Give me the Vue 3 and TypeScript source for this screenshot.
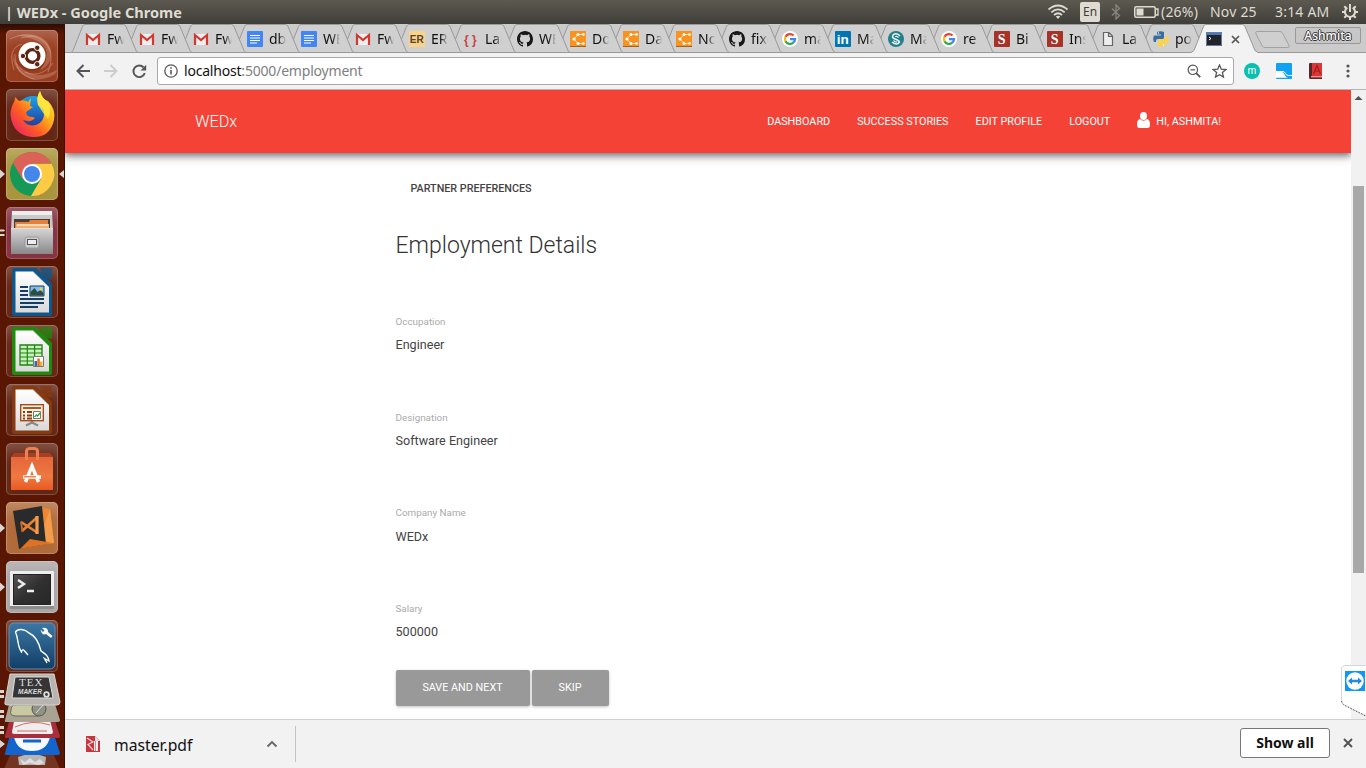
<script setup lang="ts">
interface Tab {
  icon: string
  label: string
  width: number
}
interface Field {
  label: string
  value: string
}

const tabData: [string, string][] = [
  ['gmail', 'Fwd'], ['gmail', 'Fwd'], ['gmail', 'Fwd'], ['docs', 'dbm'], ['docs', 'WED'], ['gmail', 'Fwd'],
  ['er', 'ERD'], ['braces', 'Lar'], ['github', 'WE'], ['creately', 'Doc'], ['creately', 'Dat'], ['creately', 'Nor'],
  ['github', 'fixe'], ['google', 'ma'], ['linkedin', 'Ma'], ['scribd', 'Ma'], ['google', 're'], ['sblock', 'Bi'],
  ['sblock', 'Ins'], ['page', 'La'], ['python', 'pos'],
]
const tabs: Tab[] = tabData.map(([icon, label], i) => ({ icon, label, width: i < 8 ? 54 : 53 }))

const launcher = [
  { name: 'ubuntu', mark: '' },
  { name: 'firefox', mark: '' },
  { name: 'chrome', mark: 'arrow' },
  { name: 'files', mark: 'pips' },
  { name: 'writer', mark: '' },
  { name: 'calc', mark: '' },
  { name: 'impress', mark: '' },
  { name: 'software', mark: '' },
  { name: 'code', mark: 'arrow' },
  { name: 'terminal', mark: 'arrow' },
  { name: 'mysql', mark: '' },
]

const links = ['Dashboard', 'Success Stories', 'Edit Profile', 'Logout']
const fields: Field[] = [
  { label: 'Occupation', value: 'Engineer' },
  { label: 'Designation', value: 'Software Engineer' },
  { label: 'Company Name', value: 'WEDx' },
  { label: 'Salary', value: '500000' },
]
</script>

<template>
  <div class="desktop">
    <header class="panel">
      <span class="panel-title">| WEDx - Google Chrome</span>
      <svg class="wifi" width="22" height="16" viewBox="0 0 22 16" fill="none" stroke="#dfdbd2" stroke-width="1.7">
        <path d="M1.5 5.5Q11-2.5 20.5 5.500M4.300 8.300Q11 2.500 17.700 8.300M7 11Q11 7.500 15 11" />
        <path d="M8.800 12.600Q11 10.800 13.200 12.600L11 15z" fill="#dfdbd2" stroke="none" />
      </svg>
      <span class="lang">En</span>
      <svg class="bt" width="10" height="16" viewBox="0 0 10 16" fill="none" stroke="#89867f" stroke-width="1.3">
        <path d="M1 4.500L8.500 11.500L5 15V1L8.500 4.500L1 11.500" />
      </svg>
      <svg class="battery" width="25" height="12" viewBox="0 0 25 12">
        <rect x=".75" y=".75" width="20.500" height="10.500" rx="1.500" fill="none" stroke="#dfdbd2" stroke-width="1.500" />
        <rect x="2.500" y="2.500" width="7" height="7" fill="#dfdbd2" />
        <path d="M22 3h2v6h-2" fill="none" stroke="#dfdbd2" stroke-width="1.300" />
      </svg>
      <span class="pct">(26%)</span>
      <span class="date">Nov 25</span>
      <span class="time">3:14 AM</span>
      <svg class="gear" width="16" height="16" viewBox="0 0 16 16" fill="none" stroke="#dfdbd2">
        <path d="M5.300 3.700A5 5 0 1 0 10.700 3.700" stroke-width="2" />
        <path d="M8 0V8" stroke-width="2" />
        <path d="M0 8h3M13 8h3M8 13v3M2.300 13.700l2-2M13.700 13.700l-2-2M2.300 2.300l2 2M13.700 2.300l-2 2" stroke-width="2" />
      </svg>
    </header>

    <div class="body">
      <aside class="launcher">
        <svg width="0" height="0" class="defs">
          <defs>
            <linearGradient id="paper" x1="0" y1="0" x2="0" y2="1">
              <stop offset="0" stop-color="#fff" /><stop offset="1" stop-color="#d9d9d9" />
            </linearGradient>
            <linearGradient id="metal" x1="0" y1="0" x2="0" y2="1">
              <stop offset="0" stop-color="#d6d6d6" /><stop offset="1" stop-color="#888" />
            </linearGradient>
            <linearGradient id="fox" x1="1" y1="0" x2="0" y2="1">
              <stop offset="0" stop-color="#fff044" /><stop offset=".38" stop-color="#ffae1c" />
              <stop offset=".62" stop-color="#ff5b24" /><stop offset="1" stop-color="#e3127a" />
            </linearGradient>
            <linearGradient id="globe" x1="0" y1="0" x2="0" y2="1">
              <stop offset="0" stop-color="#18a2ee" /><stop offset="1" stop-color="#25318f" />
            </linearGradient>
            <linearGradient id="bag" x1="0" y1="0" x2="0" y2="1">
              <stop offset="0" stop-color="#e4673a" /><stop offset=".6" stop-color="#f07840" /><stop offset="1" stop-color="#e65a22" />
            </linearGradient>
            <linearGradient id="screen" x1="0" y1="0" x2="1" y2="1">
              <stop offset="0" stop-color="#555" /><stop offset=".5" stop-color="#303030" /><stop offset="1" stop-color="#272727" />
            </linearGradient>
            <linearGradient id="sea" x1="0" y1="0" x2="0" y2="1">
              <stop offset="0" stop-color="#3b77a5" /><stop offset="1" stop-color="#123f67" />
            </linearGradient>
          </defs>
        </svg>
        <div v-for="app in launcher" :key="app.name" class="slot">
          <svg class="mark" width="6" height="12" viewBox="0 0 6 12" fill="#dcd6d3">
            <path v-if="app.mark === 'arrow'" d="M0 1.500L5 6L0 10.500z" />
            <path v-if="app.mark === 'pips'" d="M0 2.500h4l1 1-1 1H0zM0 7h4l1 1-1 1H0z" />
          </svg>
          <div class="tile" :class="app.name">
            <svg width="52" height="52" viewBox="0 0 52 52">
              <g v-if="app.name === 'ubuntu'">
                <g fill="none" stroke="#e8b09b" stroke-opacity=".4" stroke-width="1.200">
                  <path d="M4 9Q24-1 40 13Q49 24 42 42M15 8Q38 1 45 24M8 40Q1 18 16 14M28 49Q9 45 9 24M47 33Q35 49 19 42" />
                </g>
                <path d="M11 6Q38 0 45 20Q46 36 34 40Q49 20 31 11Q20 6 11 6zM7 23Q5 42 28 50Q50 48 51 40Q31 50 18 40Q7 33 7 23z" fill="#eac2b0" fill-opacity=".28" />
                <circle cx="26" cy="27" r="14" fill="#7b2710" opacity=".5" />
                <circle cx="26" cy="25.500" r="13.500" fill="#fff" />
                <circle cx="26.500" cy="26" r="6.400" fill="none" stroke="#5b2413" stroke-width="3.400" />
                <g fill="#5b2413" stroke="#fff" stroke-width=".9"><circle cx="17" cy="26" r="2.700" /><circle cx="31.200" cy="17.800" r="2.700" /><circle cx="31.200" cy="34.200" r="2.700" /></g>
              </g>
              <g v-else-if="app.name === 'firefox'">
                <circle cx="27" cy="24" r="17" fill="url(#globe)" />
                <path d="M4.500 25C5 18 7 15 8.500 12L9 8L13 12Q18 10 22 13L25 9L24 17L27 18L20 23Q20 28 27 28L29 29Q25 34 17 31Q21 38 30 36Q39 33 38 22Q37 19 32 16Q30 8 34 2Q36 10 42 12Q50 20 48 31Q44 49 26 48Q6 46 4.500 25z" fill="url(#fox)" />
                <path d="M34 2Q36 10 43 14Q46 21 42 30Q36 23 32 16Q30 8 34 2z" fill="#fff044" opacity=".75" />
              </g>
              <g v-else-if="app.name === 'chrome'">
                <circle cx="26" cy="26" r="22" fill="#159957" />
                <path d="M26 15.500H45.500A22 22 0 0 1 25 48L35 31z" fill="#ffcb45" />
                <path d="M7 15A22 22 0 0 1 45.500 15.500H26L16.500 31z" fill="#dc6157" />
                <circle cx="26" cy="26" r="10" fill="#fff" /><circle cx="26" cy="26" r="8" fill="#4587e9" />
              </g>
              <g v-else-if="app.name === 'files'">
                <path d="M6 4H46L47 22H5z" fill="#c9c9c9" /><path d="M6 4H46V8H6z" fill="#eee" />
                <path d="M8 12H44V24H8z" fill="#4a3c37" />
                <path d="M9 15H23L24 13H42V23H9z" fill="#e67f38" /><path d="M10 17H43V23H10z" fill="#f5b06c" /><path d="M11 18H42" stroke="#fff" />
                <path d="M5 21H47V47H5z" fill="url(#metal)" /><path d="M5 21.500H47" stroke="#ddd" />
                <rect x="19" y="30" width="14" height="11" rx="2" fill="#ccc" stroke="#999" /><rect x="21.500" y="32.500" width="9" height="5" fill="#eee" stroke="#555" />
              </g>
              <g v-else-if="['writer', 'calc', 'impress'].includes(app.name)">
                <g :class="app.name + '-edge'"><path d="M8 2H30L46 18V48Q46 50 44 50H8Q6 50 6 48V4Q6 2 8 2z" /><path d="M34 2H46V14Q36 13 34 2z" opacity=".75" /></g>
                <path d="M9.500 5.500H27L43 21V46.500H9.500z" fill="url(#paper)" /><path d="M27 5.500L43 21" stroke="#999" stroke-width=".6" />
                <g v-if="app.name === 'writer'">
                  <path d="M14 21h8M14 25h8M14 29h8M14 33h24M14 37h24M14 41h18" stroke="#123f68" stroke-width="2" />
                  <path d="M24 20h14v10H24z" fill="#79c2ef" stroke="#173e5c" /><path d="M24.500 29.500V26l4-4 3 4 3-2 3 3v2.500z" fill="#2f4c40" /><circle cx="35" cy="23" r="1.500" fill="#f8cc3a" />
                </g>
                <g v-else-if="app.name === 'calc'">
                  <path d="M14 20h22v20H14z" fill="#c5f4b9" stroke="#258015" stroke-width="1.300" /><path d="M14 23.800h22M14 28h22M14 32h22M14 36h22M21.300 20v20M28.600 20v20" stroke="#258015" stroke-width="1.200" />
                  <path d="M27.500 31.500h10v10h-10z" fill="#fff" stroke="#777" /><path d="M28.500 36h2.500v5h-2.500z" fill="#276bb0" /><path d="M31.300 33.500h2.500V41h-2.500z" fill="#e56c23" /><path d="M34 36.500h2.500V41H34z" fill="#eeb332" />
                </g>
                <g v-else>
                  <path d="M26 37v2M20 41.500l6-3 6 3" fill="none" stroke="#888" stroke-width="2.400" /><rect x="14.700" y="20.700" width="22.600" height="16" fill="#fff3e5" stroke="#a84a17" stroke-width="1.400" />
                  <path d="M17 24h18" stroke="#b15820" stroke-width="2" /><path d="M17 28h2M17 31.500h2M17 34.500h2M21 28h5M21 31.500h5M21 34.500h5" stroke="#883d12" stroke-width="2" />
                  <path d="M27.500 27.500h7v7h-7z" fill="#fff" stroke="#777" /><path d="M28.500 33l2-2 1 1 2.500-3" fill="none" stroke="#2d9c42" stroke-width="1.300" />
                </g>
              </g>
              <g v-else-if="app.name === 'software'">
                <path d="M8 10H44L47 14H5z" fill="#aa3e21" /><path d="M5 14H47V47H5z" fill="url(#bag)" />
                <path d="M20.500 17V8Q21 5.500 24 5.500H28Q31 5.500 31.500 8V17" fill="none" stroke="#ef8055" stroke-width="3" />
                <path d="M19.500 39L26 23L32.500 39M17 34H35" fill="none" stroke="#fff" stroke-width="3.400" /><path d="M18 33.800h12" stroke="#f2622a" stroke-width="1.200" />
              </g>
              <g v-else-if="app.name === 'code'">
                <path d="M35 5L44 7L48 41L31 43z" fill="#ed8733" /><path d="M44 7L48 41L31 43L35 33z" fill="#f39c49" />
                <path d="M7 9L36 4L40 42L13 47z" fill="#292a2c" /><path d="M24 37L47 41L14 47z" fill="#dd7224" />
                <path d="M31.500 15L16 29M15 20L32 31" fill="none" stroke="#e98032" stroke-width="2.600" /><path d="M31 14V32" stroke="#f39c49" stroke-width="3.200" /><path d="M15 19.500L16.500 30" stroke="#c96a25" stroke-width="1.800" />
              </g>
              <g v-else-if="app.name === 'terminal'">
                <rect x="4" y="10" width="44" height="37" rx="1" fill="#eee" /><path d="M4 45h44v3H4z" fill="#8c8c8c" />
                <rect x="7.500" y="13.500" width="37" height="30" fill="url(#screen)" stroke="#222" /><path d="M12 19L18 23L12 27M21 30H28" fill="none" stroke="#eee" stroke-width="2.400" />
              </g>
              <g v-else>
                <rect x="3" y="3" width="46" height="46" rx="5" fill="url(#sea)" stroke="#6391b5" />
                <path d="M22 35C18 31 17 27 15.500 32C11 26 13 20 9.500 12C12 8 19 9 23 13C30 16 33 23 35 31C39 34 42 35 43 41L38.500 38.500L41 43" fill="none" stroke="#fff" stroke-width="1.400" />
                <path d="M36 8L38.500 10.500L37 12L34.500 9.500Q36 16 40 14L45 18L46.500 16L42 12Q42 7 36 8z" fill="#fff" />
              </g>
            </svg>
          </div>
          <svg v-if="app.name === 'chrome'" width="7" height="12" viewBox="0 0 7 12"><path d="M6 2L1 6L6 10z" fill="#dcd6d3" /></svg>
        </div>
        <svg class="folded" width="65" height="96" viewBox="0 0 65 96">
          <g>
            <path d="M10 82H54L60 96H4z" fill="#743422" /><path d="M18 84Q32 78 46 84L45 92H19z" fill="#b7b5b1" /><path d="M20 86l5 3 5-4 5 4 5-3 4 4-6 2-8-2-7 2z" fill="#ddd" />
            <path d="M10 62H54L60 80Q60 82 57 82H7Q4 82 5 80z" fill="#1464cd" /><path d="M14 64H50Q47 78 32 78T14 64z" fill="#f4f8ff" /><path d="M23 68h18" stroke="#1464cd" stroke-width="3" />
            <path d="M10 45H54L60 63Q60 65 57 65H7Q4 65 5 63z" fill="#a82e3d" /><path d="M15 43H49L53 59Q53 61 51 61H14Q12 61 12 59z" fill="#eee" /><path d="M15 54Q32 46 50 52M17 58h30" fill="none" stroke="#d74048" stroke-width=".8" />
            <path d="M10 28H54L60 47Q60 49 57 49H7Q4 49 5 47z" fill="#aaa394" /><path d="M11 37Q11 32 16 32H38V43H16Q9 43 11 37z" fill="#c9c9a1" stroke="#696852" /><circle cx="39" cy="36" r="7" fill="#909285" stroke="#555" /><path d="M36 40l7-8" stroke="#ddd" />
            <path d="M10 1H54L60 29Q60 32 57 32H7Q4 32 5 29z" fill="#b8b5b1" stroke="#d6d2cf" /><path d="M15 4H49L53 25H12z" fill="#353535" stroke="#ddd" />
          </g>
          <text x="19" y="12.500" class="tex">TEX</text><text x="18" y="21" class="maker">MAKER</text>
          <circle cx="46.500" cy="21.500" r="2.300" fill="none" stroke="#ddd" stroke-width="1.800" />
          <path d="M0 17h4v3H0zM0 22h4v3H0zM0 37h4v3H0zM0 42h4v3H0zM0 53h4v3H0zM0 58h4v3H0zM0 67l5 4-5 4z" fill="#dcd6d3" />
        </svg>
      </aside>

      <section class="browser">
        <div class="tabstrip">
          <div v-for="(tab, i) in tabs" :key="i" class="tab" :style="{ width: tab.width + 'px', zIndex: 30 - i }">
            <svg class="shape" width="70" height="29" viewBox="0 0 70 29">
              <path d="M.5 28.500L2 26.500L11.500 2.500Q12.300 .5 14 .5H52.500Q54 .5 55 2.500L65 26.500L67 28.500z" fill="#d0d0d0" stroke="#999" />
            </svg>
            <svg class="fav" width="16" height="16" viewBox="0 0 16 16">
              <g v-if="tab.icon === 'gmail'"><path d="M1 3H15V14H1z" fill="#eee" /><path d="M2 14V4L8 9L14 4V14" fill="none" stroke="#d3382e" stroke-width="2.200" /></g>
              <g v-else-if="tab.icon === 'docs'"><rect width="16" height="16" rx="1" fill="#4285f4" /><path d="M3 4.500h10M3 7h10M3 9.500h10M3 12h7" stroke="#fff" stroke-width="1.100" /></g>
              <g v-else-if="tab.icon === 'er'"><rect width="16" height="16" fill="#f7d486" /><text x=".8" y="12" class="ico er">ER</text></g>
              <g v-else-if="tab.icon === 'braces'"><text x="1" y="12.500" class="ico brace">{ }</text></g>
              <path v-else-if="tab.icon === 'github'" d="M8 0C3.580 0 0 3.580 0 8c0 3.540 2.290 6.530 5.470 7.590.4.070.550-.170.550-.380V13.720c-2.010.370-2.530-.490-2.690-.940-.090-.230-.480-.940-.820-1.130-.280-.150-.680-.520-.010-.530.630-.010 1.080.580 1.230.820.720 1.210 1.870.870 2.330.660.070-.520.280-.870.510-1.070-1.780-.200-3.640-.890-3.640-3.950 0-.870.310-1.590.820-2.150-.080-.200-.360-1.020.080-2.120 0 0 .670-.210 2.200.820a7.600 7.600 0 0 1 4 0c1.530-1.040 2.200-.820 2.200-.820.440 1.100.160 1.920.080 2.120.510.560.820 1.270.820 2.150 0 3.070-1.870 3.750-3.650 3.950.290.250.540.730.540 1.480v2.200c0 .210.150.460.550.380A8 8 0 0 0 16 8c0-4.420-3.580-8-8-8z" fill="#191717" />
              <g v-else-if="tab.icon === 'creately'"><rect width="16" height="16" fill="#f7931e" /><path d="M0 15.500h16" stroke="#9f6425" /><path d="M13 3.500H8L4 8l4 4.500h5" fill="none" stroke="#fff" stroke-width=".7" /><g fill="#fff"><circle cx="13.500" cy="3.500" r="1.300" /><circle cx="8" cy="3.500" r="1.500" /><circle cx="4" cy="8" r="1.600" /><circle cx="8" cy="12.500" r="1.500" /><circle cx="13.500" cy="12.500" r="1.300" /></g></g>
              <g v-else-if="tab.icon === 'google'"><circle cx="8" cy="8" r="8" fill="#fff" /><g fill="none" stroke-width="2.300"><path d="M11.500 4.500A5 5 0 0 0 3.500 5.800" stroke="#ea4335" /><path d="M3.500 5.800A5 5 0 0 0 3.500 10.200" stroke="#fbbc05" /><path d="M3.500 10.200A5 5 0 0 0 11.200 11.700" stroke="#34a853" /><path d="M11.200 11.700A5 5 0 0 0 13 8.200H8" stroke="#4285f4" /></g></g>
              <g v-else-if="tab.icon === 'linkedin'"><rect width="16" height="16" rx="1" fill="#0077b5" /><text x="1.800" y="13" class="ico in">in</text></g>
              <g v-else-if="tab.icon === 'scribd'"><circle cx="8" cy="8" r="8" fill="#247f8b" /><path d="M12 5Q9 1.500 5.500 3.500Q3 6.500 7 8T11.500 11Q9 15 4 11" fill="none" stroke="#e6f3f3" stroke-width="1.600" /><path d="M10.500 6.500Q8 4.500 7.500 6M5.500 9.500Q8 12 9 10.500" fill="none" stroke="#e6f3f3" stroke-width="1.300" /></g>
              <g v-else-if="tab.icon === 'sblock'"><rect width="16" height="16" rx="1" fill="#a73227" /><text x="3.800" y="13" class="ico ess">S</text></g>
              <path v-else-if="tab.icon === 'page'" d="M3.500 1.500H9L12.500 5V14.500H3.500zM8.500 1.500V5.500H12.500" fill="#eee" stroke="#666" stroke-width="1.200" />
              <g v-else><path d="M4 1Q8-.5 11 1V6.500Q11 8 9 8H5Q3 8 3 10V11H1Q-.5 8 1 4.500H8V3.500H4z" fill="#366f9f" /><path d="M12 15Q8 16.500 5 15V10Q5 8.500 7 8.500H11Q13 8.500 13 6V5H15Q16.500 8 15 12H8V13H12z" fill="#ffd23e" /><circle cx="5.500" cy="2" r=".7" fill="#fff" /><circle cx="10.500" cy="14.200" r=".7" fill="#fff" /></g>
            </svg>
            <span class="tab-label">{{ tab.label }}</span>
          </div>
          <div class="tab active">
            <svg class="shape" width="70" height="29" viewBox="0 0 70 29">
              <path d="M-1 28.500L2 26.500L11.500 2.500Q12.300 .5 14 .5H50.500Q52 .5 53 2.500L63 26.500L66 28.500V30H-1z" fill="#f2f2f2" /><path d="M-1 28.500L2 26.500L11.500 2.500Q12.300 .5 14 .5H50.500Q52 .5 53 2.500L63 26.500L66 28.500" fill="none" stroke="#999" />
            </svg>
            <svg class="fav" width="16" height="16" viewBox="0 0 16 16"><path d="M0 1h16v14H0z" fill="#20242a" /><path d="M0 1h16v3H0z" fill="#4379c6" /><path d="M.5 1.500h15v13H.5z" fill="none" stroke="#6a7b94" /><path d="M3 6l2 1.500L3 9" stroke="#fff" fill="none" /></svg>
            <svg class="close" width="9" height="9" viewBox="0 0 9 9"><path d="M1 1l7 7M8 1L1 8" stroke="#555" stroke-width="1.700" /></svg>
          </div>
          <svg class="newtab" width="36" height="18" viewBox="0 0 36 18"><path d="M1 .5H24Q26 .5 27 3L33 14.500Q34 16.500 31 16.500H9Q7 16.500 6 14.500L0 3Q-1 .5 1 .5z" fill="#cfcfcf" stroke="#a2a2a2" /></svg>
          <span class="profile">Ashmita</span>
        </div>

        <div class="toolbar">
          <svg class="back" width="14" height="14" viewBox="0 0 14 14" fill="none" stroke="#555" stroke-width="2"><path d="M7.500 1L1.500 7l6 6M1.500 7H14" /></svg>
          <svg class="fwd" width="14" height="14" viewBox="0 0 14 14" fill="none" stroke="#ccc" stroke-width="2"><path d="M6.500 1l6 6-6 6M12.500 7H0" /></svg>
          <svg class="reload" width="15" height="15" viewBox="0 0 15 15"><path d="M12.800 9A5.800 5.800 0 1 1 11.600 3.400" fill="none" stroke="#555" stroke-width="1.900" /><path d="M14.200 .8V6.500H8.500z" fill="#555" /></svg>
          <div class="omnibox">
            <svg width="14" height="14" viewBox="0 0 14 14"><circle cx="7" cy="7" r="6.200" fill="none" stroke="#5a5a5a" stroke-width="1.300" /><path d="M7 6v4.500M7 3.200v1.600" stroke="#5a5a5a" stroke-width="1.600" /></svg>
            <span class="url">localhost<em>:5000/employment</em></span>
            <svg class="lens" width="14" height="14" viewBox="0 0 14 14" fill="none" stroke="#555"><circle cx="5.800" cy="5.800" r="4.700" stroke-width="1.200" /><path d="M9.200 9.200l4 4" stroke-width="1.800" /><path d="M3.500 5.800h4.600" stroke-width="1.200" /></svg>
            <svg class="star" width="15" height="14" viewBox="0 0 15 14"><path d="M7.500 1l1.800 4.200 4.600.4-3.500 3 1.100 4.500-4-2.400-4 2.400 1.100-4.500-3.500-3 4.600-.4z" fill="none" stroke="#555" stroke-width="1.300" /></svg>
          </div>
          <svg class="ext m" width="16" height="16" viewBox="0 0 16 16"><circle cx="8" cy="8" r="8" fill="#0abfae" /><text x="3.400" y="11" class="ico em">m</text></svg>
          <svg class="ext" width="16" height="16" viewBox="0 0 16 16"><rect width="16" height="16" rx="1" fill="#10a2f3" /><path d="M0 9h6q1.500 0 2.500 2.500t3.500 3.300H0z" fill="#fff" /><path d="M0 8.500h7q1.500 0 2.500 2t3 2h3.500" fill="none" stroke="#fff" stroke-width="1" /></svg>
          <svg class="ext" width="16" height="16" viewBox="0 0 16 16"><path d="M1 1Q1 0 2 0H14V13H3v2H14V16H2Q1 16 1 14z" fill="#5a2526" /><path d="M4 0H14V13H4z" fill="#d93836" /><path d="M3 13.500h11v1.500H3z" fill="#c9403c" /><path d="M5.500 11L9 2.500L12.500 11M6.500 8h5" fill="none" stroke="#a9191f" stroke-width="1.200" /></svg>
          <svg class="dots" width="4" height="14" viewBox="0 0 4 14" fill="#555"><circle cx="2" cy="2" r="1.600" /><circle cx="2" cy="7" r="1.600" /><circle cx="2" cy="12" r="1.600" /></svg>
        </div>

        <div class="viewport">
          <main class="page">
            <nav class="navbar">
              <a class="brand">WEDx</a>
              <a v-for="link in links" :key="link" class="link">{{ link }}</a>
              <a class="link user">
                <svg width="13" height="16" viewBox="0 0 13 16" fill="#fff"><ellipse cx="6.500" cy="4" rx="3.500" ry="4" /><path d="M3 7Q6.500 10.500 10 7Q13 7.500 13 13Q13 16 10.500 16H2.500Q0 16 0 13Q0 7.500 3 7z" /></svg>
                Hi, Ashmita!
              </a>
            </nav>
            <div class="content">
              <div class="step">Partner Preferences</div>
              <h1>Employment Details</h1>
              <div v-for="f in fields" :key="f.label" class="field">
                <label>{{ f.label }}</label>
                <div class="value">{{ f.value }}</div>
              </div>
              <div class="actions"><button class="save">Save and Next</button><button class="skip">Skip</button></div>
            </div>
          </main>
          <div class="scrollbar">
            <svg width="15" height="16" viewBox="0 0 15 16"><path d="M3.500 10L7.500 6L11.500 10z" fill="#505050" /></svg>
            <div class="thumb"></div>
          </div>
        </div>

        <footer class="downloads">
          <svg class="pdf" width="15" height="16" viewBox="0 0 15 16"><path d="M0 0H9L14 5V16H0z" fill="#c9353d" /><path d="M9 0V5h5z" fill="#ddd" /><path d="M1 2l6 4-5 2.500 5 5.500" fill="none" stroke="#f4d6d7" stroke-width="1.200" /><path d="M8 5h4v10H8z" fill="#eee" /><path d="M9.500 5v10" stroke="#d98a8d" /></svg>
          <span class="file">master.pdf</span>
          <svg class="chev" width="12" height="8" viewBox="0 0 12 8"><path d="M1.500 6.500L6 2l4.500 4.500" fill="none" stroke="#666" stroke-width="1.800" /></svg>
          <span class="rule"></span>
          <button class="showall">Show all</button>
          <svg class="dclose" width="10" height="10" viewBox="0 0 10 10"><path d="M1 1l8 8M9 1L1 9" stroke="#555" stroke-width="2" /></svg>
        </footer>
      </section>
    </div>
    <svg class="viewer" width="25" height="53" viewBox="0 0 25 53">
      <path d="M26 1.500H5Q.5 1.500 .5 5V36Q.5 40 5 42L26 52.500z" fill="#fff" stroke="#d5d5de" /><path d="M.5 37Q.5 40 5 42L26 52.500" fill="none" stroke="#555" stroke-dasharray="1.500 1.500" />
      <rect x="4" y="7" width="20" height="20" fill="#1296f3" /><circle cx="14" cy="17" r="8.700" fill="#fff" /><path d="M7 17l4-3.500v2.300h6v-2.300l4 3.500-4 3.500v-2.300h-6v2.300z" fill="#2389e5" />
    </svg>
  </div>
</template>

<style>
html, body { margin: 0; overflow: hidden; }
</style>

<style scoped>
* { box-sizing: border-box; }
svg { display: block; flex: none; }
.desktop { position: relative; width: 1366px; height: 768px; display: flex; flex-direction: column; overflow: hidden; background: #fff; font-family: "Noto Sans", "Open Sans", sans-serif; }
.panel { height: 24px; flex: none; display: flex; align-items: center; background: linear-gradient(#5c5a50, #3f3e39); color: #dfdbd2; font-size: 14px; white-space: nowrap; line-height: 24px; }
.panel-title { font-weight: 700; width: 1042px; margin-left: 5px; font-size: 14.550px; }
.panel span:not(.panel-title):not(.lang) { letter-spacing: .2px; }
.lang { width: 20px; height: 20px; margin-left: 11px; background: #dfdbd2; border-radius: 2px; color: #3f3e39; text-align: center; font-size: 12px; line-height: 20px; }
.bt { margin-left: 11px; }
.battery { margin-left: 13px; }
.pct { margin-left: 2px; width: 49px; }
.date { width: 65px; }
.time { width: 67px; }
.body { flex: 1; display: flex; min-height: 0; }
.launcher { width: 65px; flex: none; padding-top: 6px; background: linear-gradient(#2f0c02, #581603 10px, #581603); border-right: 1px solid #3a0f04; }
.defs { height: 0; }
.slot { display: flex; align-items: center; height: 52px; margin-bottom: 7px; }
.tile { width: 52px; height: 52px; border-radius: 5px; background: #632615; box-shadow: inset 0 0 0 1px rgba(255,255,255,.2), inset 0 14px 14px -6px rgba(255,255,255,.22); }
.tile.ubuntu { background: #9a3e20; }
.tile.chrome { background: #a9953d; }
.tile.files { background: #853140; }
.tile.code { background: #b16b3b; }
.tile.terminal { background: #aaa6a5; }
.writer-edge { fill: #0e578c; }
.calc-edge { fill: #1e8a0e; }
.impress-edge { fill: #853a10; }
.folded { margin-top: -6px; }
.tex { font: 11px "Liberation Serif", serif; fill: #ddd; letter-spacing: 1px; }
.maker { font: italic 700 6.500px "Liberation Sans", sans-serif; fill: #ddd; }
.browser { flex: 1; min-width: 0; display: flex; flex-direction: column; }
.tabstrip { height: 29px; flex: none; display: flex; background: #cbcbcb; border-bottom: 1px solid #999; padding-left: 6px; }
.tab { position: relative; flex: none; display: flex; height: 29px; padding-left: 14px; }
.shape { position: absolute; left: 0; top: 0; overflow: visible; }
.fav { position: relative; margin-top: 7px; }
.tab-label { position: relative; width: 17px; margin-left: 6px; font-size: 14px; line-height: 29px; color: #111; overflow: hidden; white-space: nowrap; flex: none; -webkit-mask-image: linear-gradient(90deg, #000 55%, transparent); mask-image: linear-gradient(90deg, #000 55%, transparent); }
.active { width: 64px; z-index: 40; }
.close { position: relative; margin: 11px 0 0 9px; }
.ico { font-family: "Liberation Sans", sans-serif; font-weight: 700; }
.er { font-size: 10px; fill: #5b4034; }
.brace { font-size: 12px; fill: #cb4046; }
.in { font-size: 13.500px; fill: #fff; }
.ess { font: 700 14px "Liberation Serif", serif; fill: #fff; }
.em { font-size: 10.500px; font-weight: 400; fill: #fff; }
.newtab { margin-top: 7px; overflow: visible; }
.profile { width: 66px; height: 17px; margin: 3px 0 0 3px; border: 1px solid #999; border-radius: 2px; background: #c7c7c7; text-align: center; font: 500 12px/15px "Noto Sans", sans-serif; color: #fff; text-shadow: 1px 0 #333, -1px 0 #333, 0 1px #333, 0 -1px #333; }
.toolbar { height: 37px; flex: none; display: flex; align-items: center; background: #f2f2f2; border-bottom: 1px solid #b5b5b5; }
.back { margin-left: 11px; }
.fwd { margin-left: 14px; }
.reload { margin-left: 14px; }
.omnibox { width: 1077px; height: 28px; margin-left: 10px; display: flex; align-items: center; padding-left: 6px; background: #fff; border: 1px solid #a9a9a9; border-radius: 3px; }
.url { margin-left: 6px; flex: 1; font-size: 14px; letter-spacing: -.200px; line-height: 26px; color: #111; }
.url em { font-style: normal; color: #808080; }
.lens { margin-right: 11px; }
.star { margin-right: 6px; }
.ext { margin-left: 16px; }
.ext.m { margin-left: 10px; }
.dots { margin-left: 22px; }
.viewport { flex: 1; display: flex; min-height: 0; }
.page { flex: 1; min-width: 0; overflow: hidden; font-family: Roboto, sans-serif; background: #fff; }
.navbar { height: 63px; display: flex; align-items: center; padding: 0 130px; background: #f44336; color: #fff; box-shadow: 0 2px 7px rgba(0,0,0,.5), 0 5px 9px rgba(0,0,0,.16); }
.brand { flex: 1; font-size: 16.200px; font-weight: 300; }
.link { margin-left: 27px; font-size: 10.800px; text-transform: uppercase; white-space: nowrap; }
.user { display: flex; align-items: center; gap: 6px; }
.user svg { margin-top: -3px; }
.content { margin-left: 330.500px; color: #444; }
.step { padding: 29px 0 0 15px; font-size: 10.750px; line-height: 14px; font-weight: 500; text-transform: uppercase; }
h1 { margin: 33px 0 52px; height: 34px; font-size: 23px; line-height: 34px; font-weight: 300; color: #333; }
.field { height: 95.700px; }
label { display: block; font-size: 9.850px; line-height: 14px; color: #aaa; }
.value { margin-top: 7.400px; font-size: 12.600px; line-height: 18px; }
.actions { display: flex; gap: 2px; margin-top: -28px; }
.actions button { height: 36px; padding: 0; border: 0; border-radius: 2px; background: #999; color: #fff; font: 10.800px Roboto, sans-serif; text-transform: uppercase; box-shadow: 0 1px 3px rgba(0,0,0,.25); }
.save { width: 134px; }
.skip { width: 77px; }
.scrollbar { width: 15px; background: #f1f1f1; flex: none; }
.thumb { width: 11px; height: 387px; margin: 80px 0 0 2px; background: #a8a8a8; }
.downloads { height: 49px; flex: none; display: flex; align-items: center; background: #f2f2f2; border-top: 1px solid #d0d0d0; }
.pdf { margin: -1px 0 0 21px; }
.file { width: 152px; margin-left: 13px; padding-top: 2px; font-size: 15.700px; color: #111; }
.chev { margin-left: 0; }
.rule { width: 1px; height: 36px; margin-left: 17px; background: #c4c4c4; }
.showall { width: 90px; height: 30px; margin: -2px 0 0 auto; padding: 0 0 1px; background: #fff; border: 1px solid #777; border-radius: 3px; font: 700 14px/26px "Noto Sans", sans-serif; color: #111; }
.dclose { margin: -2px 13px 0; }
.viewer { position: absolute; right: 0; top: 664px; z-index: 60; }
</style>
